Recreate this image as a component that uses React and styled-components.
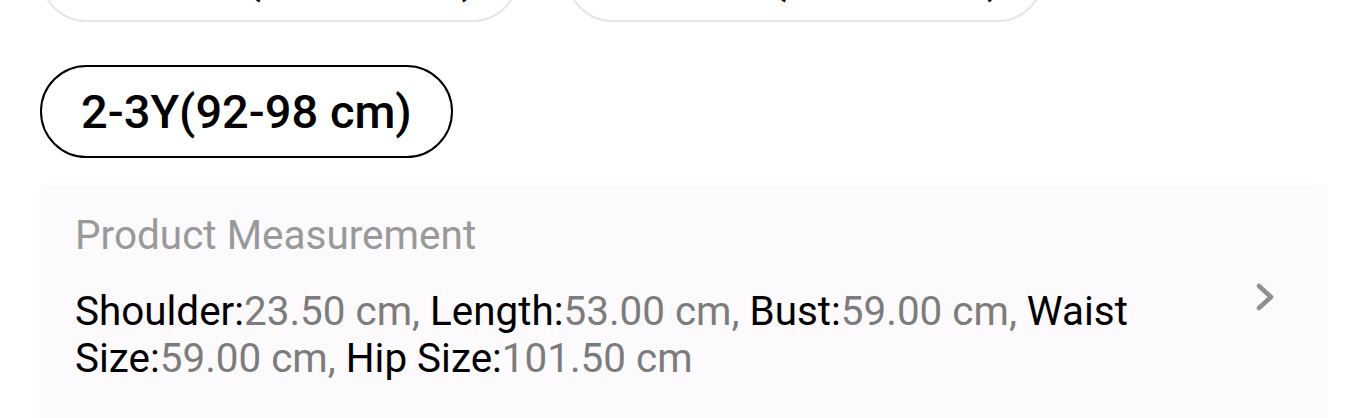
import React from 'react';
import styled, { createGlobalStyle } from 'styled-components';

const GlobalStyle = createGlobalStyle`
  html, body {
    margin: 0;
    padding: 0;
    background: #ffffff;
    font-family: Roboto, "Noto Sans", sans-serif;
    overflow: hidden;
  }
`;

const Page = styled.div`
  width: 1366px;
  height: 418px;
  overflow: hidden;
`;

const Sheet = styled.div`
  margin-top: -71px;
  padding: 0 39px 0 40px;
  display: flex;
  flex-direction: column;
`;

const SizeGrid = styled.div`
  display: flex;
  flex-wrap: wrap;
  column-gap: 47px;
  row-gap: 43px;
`;

const SizePill = styled.button`
  box-sizing: border-box;
  height: 93px;
  padding: 0 39px;
  border-radius: 47px;
  border: 2.5px solid ${p => (p.$active ? '#000000' : '#e6e6e6')};
  background: #ffffff;
  color: #000000;
  font-family: Roboto, sans-serif;
  font-size: 47px;
  font-weight: 500;
  white-space: nowrap;
  cursor: pointer;
`;

const MeasurePanel = styled.div`
  margin-top: 27px;
  background: #fdfafd;
  padding: 27px 52px 44px 35px;
  display: flex;
  align-items: center;
  gap: 40px;
`;

const MeasureBody = styled.div`
  flex: 1;
  display: flex;
  flex-direction: column;
  gap: 29px;
`;

const MeasureTitle = styled.div`
  font-size: 40.5px;
  color: #999999;
  line-height: 47px;
`;

const MeasureText = styled.div`
  font-size: 40.4px;
  line-height: 47px;
  color: #000000;
`;

const Value = styled.span`
  color: #7c7c7c;
`;

const Chevron = styled.svg`
  width: 20px;
  height: 32px;
  flex-shrink: 0;
`;

const sizes = ['12-18M(80-86 cm)', '18-24M(86-92 cm)', '2-3Y(92-98 cm)'];

const measures = [
  ['Shoulder', '23.50 cm'],
  ['Length', '53.00 cm'],
  ['Bust', '59.00 cm'],
  ['Waist Size', '59.00 cm'],
  ['Hip Size', '101.50 cm'],
];

export default function App() {
  return (
    <Page>
      <GlobalStyle />
      <Sheet>
        <SizeGrid>
          {sizes.map((s, i) => (
            <SizePill key={s} $active={i === sizes.length - 1}>{s}</SizePill>
          ))}
        </SizeGrid>
        <MeasurePanel>
          <MeasureBody>
            <MeasureTitle>Product Measurement</MeasureTitle>
            <MeasureText>
              {measures.map(([k, v], i) => (
                <React.Fragment key={k}>
                  {k}:<Value>{v}{i < measures.length - 1 ? ',' : ''}</Value>{i < measures.length - 1 ? ' ' : ''}
                </React.Fragment>
              ))}
            </MeasureText>
          </MeasureBody>
          <Chevron viewBox="0 0 20 32" fill="none" stroke="#8f8f8f" strokeWidth="4.5" strokeLinecap="round" strokeLinejoin="round">
            <path d="M4 5l12 11-12 11" />
          </Chevron>
        </MeasurePanel>
      </Sheet>
    </Page>
  );
}
